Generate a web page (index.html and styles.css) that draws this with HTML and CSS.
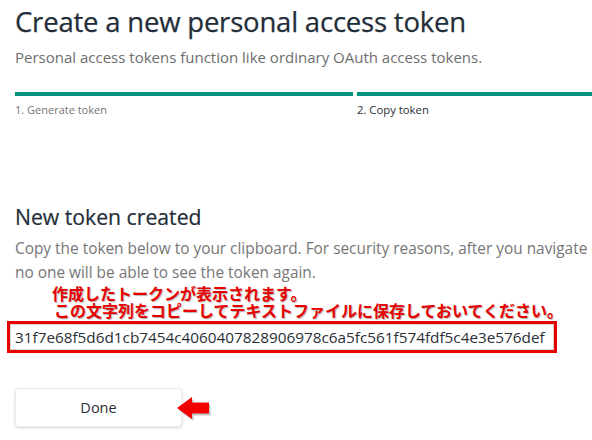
FILE: index.html
```html
<!DOCTYPE html>
<html lang="ja">
<head>
<meta charset="utf-8">
<link rel="stylesheet" href="styles.css">
</head>
<body>
<main class="page">
  <h1 class="title">Create a new personal access token</h1>
  <p class="subtitle">Personal access tokens function like ordinary OAuth access tokens.</p>

  <div class="steps">
    <div class="step step-one">
      <div class="step-bar"></div>
      <span class="step-label">1. Generate token</span>
    </div>
    <div class="step step-two">
      <div class="step-bar"></div>
      <span class="step-label step-current">2. Copy token</span>
    </div>
  </div>

  <h2 class="section-title">New token created</h2>
  <p class="section-text">Copy the token below to your clipboard. For security reasons, after you navigate o<br>no one will be able to see the token again.</p>

  <div class="note"><span class="note-line">作成したトークンが表示されます。</span><span class="note-line note-second">この文字列をコピーしてテキストファイルに保存しておいてください。</span></div>

  <div class="token-frame">
    <div class="token">31f7e68f5d6d1cb7454c4060407828906978c6a5fc561f574fdf5c4e3e576def</div>
  </div>

  <div class="actions">
    <button class="done">Done</button>
    <svg class="arrow" width="36" height="26" viewBox="0 0 36 26">
      <polygon points="0,11 15,0 15,5.5 32,5.5 32,16.5 15,16.5 15,22" fill="#6f6f6f" opacity="0.4" transform="translate(1.5,2)"/>
      <polygon points="0,11 15,0 15,5.5 32,5.5 32,16.5 15,16.5 15,22" fill="#f00000"/>
    </svg>
  </div>
</main>
</body>
</html>
```

FILE: styles.css
```css
html, body {
  margin: 0;
  padding: 0;
  background: #ffffff;
  overflow: hidden;
}

.page {
  width: 592px;
  height: 440px;
  overflow: hidden;
  font-family: "Open Sans", "Noto Sans", sans-serif;
  color: #6a6a6a;
  white-space: nowrap;
}

.title {
  margin: 0;
  padding: 2px 0 0 15px;
  font-size: 27.5px;
  font-weight: 400;
  line-height: 40px;
  color: #232d38;
  letter-spacing: -0.2px;
  -webkit-text-stroke: 0.25px #232d38;
}

.subtitle {
  margin: 4px 0 0 0;
  padding-left: 15px;
  font-size: 15px;
  line-height: 22px;
  color: #6e6e6e;
}

.steps {
  display: flex;
  gap: 4px;
  margin: 24px 0 0 15px;
}

.step {
  display: flex;
  flex-direction: column;
}

.step-one { width: 338px; }
.step-two { flex: 1; }

.step-bar {
  height: 4px;
  background: #00947f;
}

.step-label {
  margin-top: 6px;
  font-size: 11px;
  line-height: 16px;
  color: #757575;
}

.step-current {
  color: #2a2f36;
  font-size: 11.3px;
}

.section-title {
  margin: 85px 0 0 15px;
  font-size: 21.2px;
  font-weight: 400;
  line-height: 28px;
  color: #232d38;
  -webkit-text-stroke: 0.2px #232d38;
}

.section-text {
  margin: 6px 0 0 15px;
  font-size: 15.4px;
  line-height: 24px;
  color: #767676;
}

.note {
  display: flex;
  flex-direction: column;
  margin: 0 0 0 52px;
  font-family: "Noto Sans CJK JP", sans-serif;
  font-weight: 700;
  font-size: 16px;
  line-height: 17px;
  color: #e60000;
  text-shadow: 1px 1px 1px rgba(0, 0, 0, 0.3);
}

.note-second {
  margin-left: 2px;
}

.token-frame {
  display: inline-block;
  margin: 2px 0 0 7px;
  border: 3px solid #e60000;
}

.token {
  border: 1px solid #d6d6d6;
  background: #fff;
  padding: 3px 8px 3px 4px;
  font-size: 15.3px;
  line-height: 18px;
  color: #2a2f36;
}

.actions {
  position: relative;
  margin: 35px 0 0 15px;
  height: 40px;
}

.done {
  width: 167px;
  height: 39px;
  background: #fff;
  border: 1px solid #ececec;
  border-radius: 4px;
  box-shadow: 0 1px 3px rgba(0, 0, 0, 0.18);
  font-family: "Open Sans", "Noto Sans", sans-serif;
  font-size: 14.5px;
  color: #2a2f36;
  padding: 0;
}

.arrow {
  position: absolute;
  left: 162px;
  top: 9px;
}
```
